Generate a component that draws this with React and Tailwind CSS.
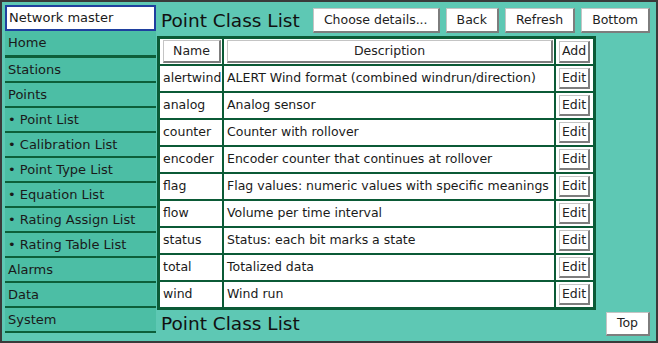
import React from "react";

const rows = [
  ["alertwind", "ALERT Wind format (combined windrun/direction)"],
  ["analog", "Analog sensor"],
  ["counter", "Counter with rollover"],
  ["encoder", "Encoder counter that continues at rollover"],
  ["flag", "Flag values: numeric values with specific meanings"],
  ["flow", "Volume per time interval"],
  ["status", "Status: each bit marks a state"],
  ["total", "Totalized data"],
  ["wind", "Wind run"],
];

const nav = [
  ["Stations", false],
  ["Points", false],
  ["Point List", true],
  ["Calibration List", true],
  ["Point Type List", true],
  ["Equation List", true],
  ["Rating Assign List", true],
  ["Rating Table List", true],
  ["Alarms", false],
  ["Data", false],
  ["System", false],
];

const btn =
  "bg-white text-[#222] border border-[#c4c4c4] border-r-[#7d7d7d] border-b-[#7d7d7d] border-r-2 border-b-2 leading-none flex items-center justify-center";

export default function App() {
  return (
    <div
      className="w-[658px] h-[343px] border-2 border-[#3a3a3a] bg-[#5ec8b4] p-[3px] flex gap-[1px] text-[12.5px] text-[#1a1a1a] overflow-hidden"
      style={{ fontFamily: '"DejaVu Sans", Verdana, sans-serif' }}
    >
      <div className="w-[151px] flex flex-col shrink-0 text-[13px]">
        <div className="h-[26px] bg-white border-2 border-[#1f3f9f] flex items-center pl-[2px]">
          Network master
        </div>
        <div className="h-[27px] bg-[#4cbea5] border-b-[3px] border-[#0d5f3a] flex items-center pl-[3px]">
          Home
        </div>
        {nav.map(([label, sub]) => (
          <div
            key={label}
            className="h-[25px] bg-[#4cbea5] border-b-2 border-[#0d5f3a] flex items-center pl-[3px]"
          >
            {sub ? "\u2022 " + label : label}
          </div>
        ))}
      </div>
      <div className="flex-1 flex flex-col pr-[3px]">
        <div className="h-[31px] flex items-center justify-between">
          <div className="pl-[4px] text-[18.5px] text-[#111]">Point Class List</div>
          <div className="flex gap-[6px]">
            <button className={btn + " h-[25px] px-[10px]"}>Choose details...</button>
            <button className={btn + " h-[25px] px-[10px]"}>Back</button>
            <button className={btn + " h-[25px] px-[10px]"}>Refresh</button>
            <button className={btn + " h-[25px] px-[10px]"}>Bottom</button>
          </div>
        </div>
        <div className="self-start w-[439px] bg-[#0b5a36] border border-[#0b5a36] p-[2px] grid grid-cols-[62px_330px_37px] gap-[2px]">
          <div className="h-[25px] bg-white p-[1px] pl-[3px]">
            <div className={btn + " h-full w-full"}>Name</div>
          </div>
          <div className="h-[25px] bg-white p-[1px] pl-[3px]">
            <div className={btn + " h-full w-full"}>Description</div>
          </div>
          <div className="h-[25px] bg-white flex items-center justify-center">
            <div className={btn + " h-[22px] px-[2px]"}>Add</div>
          </div>
          {rows.map(([n, d]) => (
            <React.Fragment key={n}>
              <div className="h-[25px] bg-white flex items-center pl-[3px]">{n}</div>
              <div className="h-[25px] bg-white flex items-center pl-[3px] whitespace-nowrap">{d}</div>
              <div className="h-[25px] bg-white flex items-center justify-center">
                <div className={btn + " h-[21px] px-[2px]"}>Edit</div>
              </div>
            </React.Fragment>
          ))}
        </div>
        <div className="flex-1 flex items-center justify-between">
          <div className="pl-[4px] text-[18.5px] text-[#111]">Point Class List</div>
          <button className={btn + " h-[24px] px-[10px]"}>Top</button>
        </div>
      </div>
    </div>
  );
}
